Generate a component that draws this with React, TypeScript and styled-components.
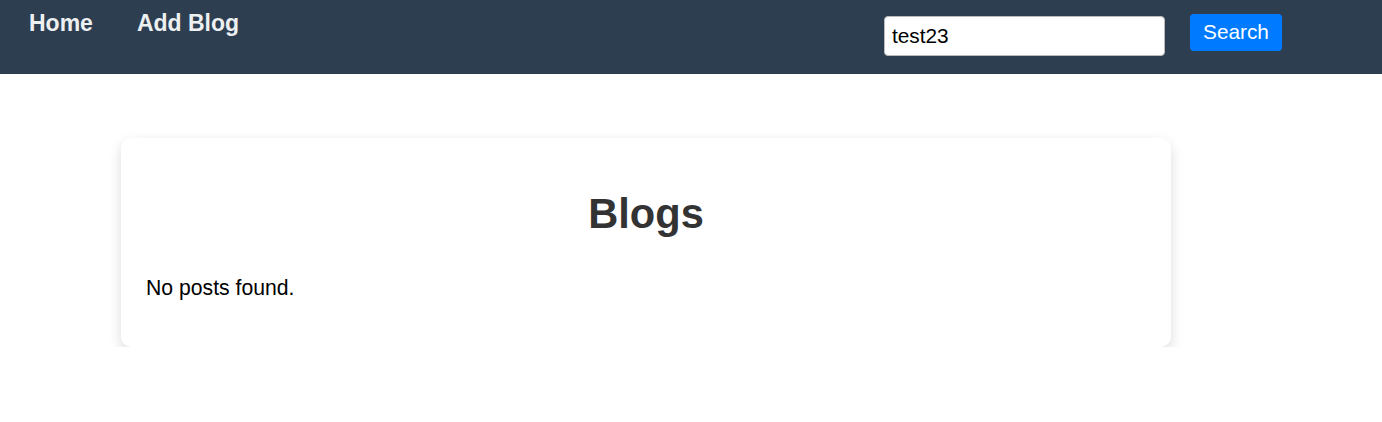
import React from "react";
import styled, { createGlobalStyle } from "styled-components";

const Global = createGlobalStyle`
  html, body { margin: 0; padding: 0; background: #ffffff; }
  body { font-family: "Liberation Sans", Arial, sans-serif; color: #000; }
  * { box-sizing: border-box; }
`;

const NavBar = styled.nav`
  height: 74px;
  background: #2e3e51;
  display: flex;
  align-items: flex-start;
  justify-content: space-between;
  padding: 0 100px 0 29px;
`;

const NavLinks = styled.div`
  display: flex;
  gap: 44px;
  padding-top: 9px;
`;

const NavLink = styled.a`
  color: #ecf0f1;
  font-weight: bold;
  font-size: 23px;
  text-decoration: none;
  line-height: 28px;
`;

const SearchForm = styled.form`
  display: flex;
  align-items: flex-start;
  gap: 25px;
`;

const SearchInput = styled.input`
  margin-top: 16px;
  width: 281px;
  height: 40px;
  border: 1px solid #bbbbbb;
  border-radius: 4px;
  padding: 0 7px;
  font-family: "Liberation Sans", Arial, sans-serif;
  font-size: 20.8px;
  color: #000;
  outline: none;
`;

const SearchButton = styled.button`
  margin-top: 14px;
  width: 92px;
  height: 37px;
  border: none;
  border-radius: 4px;
  background: #007bff;
  color: #ffffff;
  font-family: "Liberation Sans", Arial, sans-serif;
  font-size: 20.8px;
  line-height: 35px;
  padding: 0 0 2px 0;
  cursor: pointer;
`;

const Main = styled.main`
  display: flex;
  justify-content: flex-start;
  padding: 64px 0 0 121px;
`;

const Card = styled.section`
  width: 1050px;
  height: 209px;
  background: #ffffff;
  border-radius: 10px;
  box-shadow: 0 5px 13px rgba(0, 0, 0, 0.14);
  padding: 50px 25px 0 25px;
`;

const Title = styled.h1`
  margin: 0;
  text-align: center;
  font-size: 41.6px;
  font-weight: bold;
  color: #333333;
  line-height: 52px;
`;

const Empty = styled.p`
  margin: 36px 0 0 0;
  font-size: 21.2px;
  line-height: 24px;
  color: #000;
`;

export default function App() {
  return (
    <>
      <Global />
      <NavBar>
        <NavLinks>
          <NavLink href="#">Home</NavLink>
          <NavLink href="#">Add Blog</NavLink>
        </NavLinks>
        <SearchForm onSubmit={(e) => e.preventDefault()}>
          <SearchInput defaultValue="test23" />
          <SearchButton type="submit">Search</SearchButton>
        </SearchForm>
      </NavBar>
      <Main>
        <Card>
          <Title>Blogs</Title>
          <Empty>No posts found.</Empty>
        </Card>
      </Main>
    </>
  );
}
